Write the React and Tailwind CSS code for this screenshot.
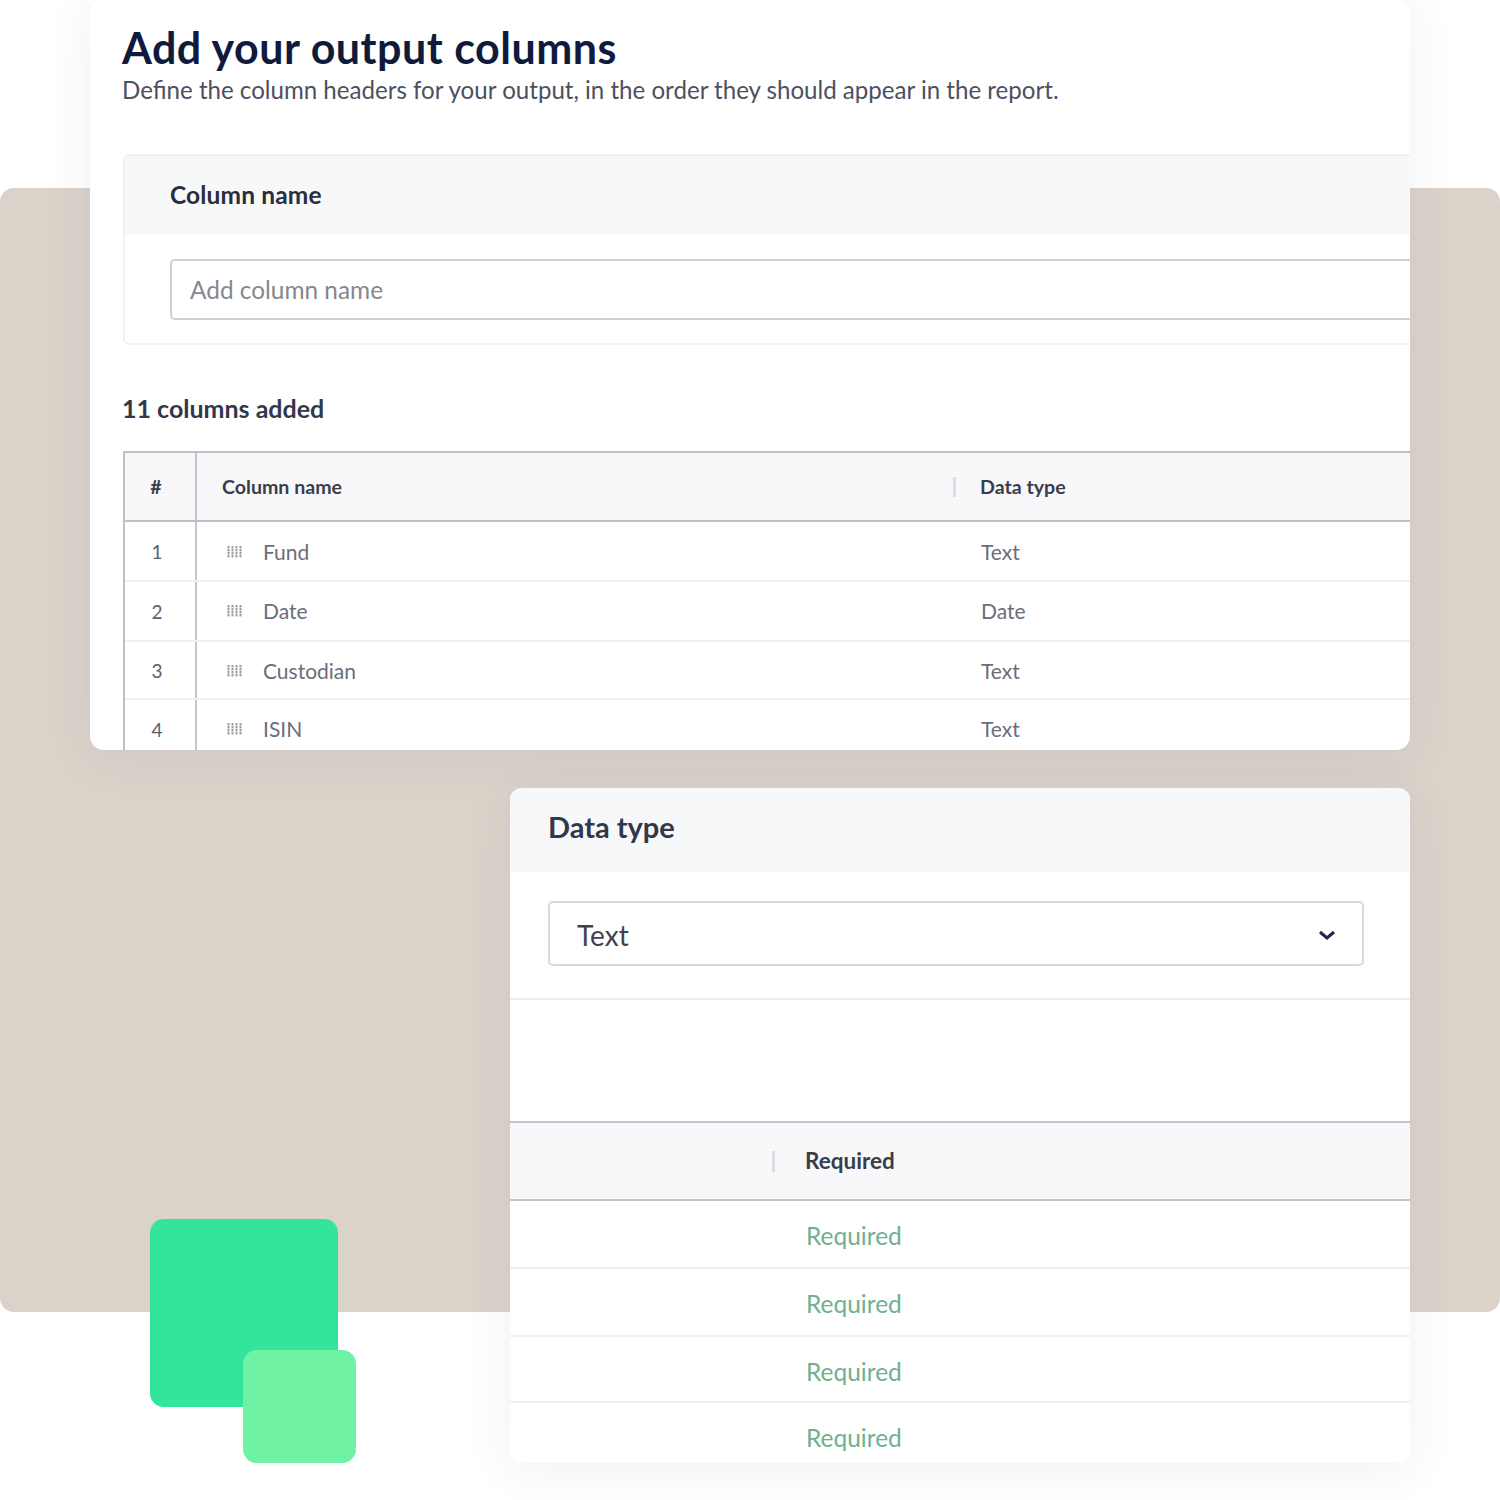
const font = { fontFamily: '"Lato", "Noto Sans", sans-serif' };

function Grip() {
  return (
    <svg width="16" height="12" viewBox="0 0 16 12" className="shrink-0">
      {[0.5, 4.5, 8.5, 12.5].map((x) =>
        [0, 3, 6, 9].map((y) => <rect key={`${x}-${y}`} x={x} y={y} width="2" height="2.4" fill="#9a9ca3" />)
      )}
    </svg>
  );
}

const rows = [
  { n: "1", name: "Fund", type: "Text", h: "h-[60px]", numPad: "pt-[3px]", textPad: "pt-[2px]" },
  { n: "2", name: "Date", type: "Date", h: "h-[60px]", numPad: "pt-[3px]", textPad: "pt-0" },
  { n: "3", name: "Custodian", type: "Text", h: "h-[58px]", numPad: "pt-[3px]", textPad: "pt-[2px]" },
  { n: "4", name: "ISIN", type: "Text", h: "h-[60px]", numPad: "pt-[1px]", textPad: "pb-[2px]" },
];

function Row({ n, name, type, h, numPad, textPad, last }) {
  return (
    <div className={`flex ${h} shrink-0 items-center ${last ? "" : "border-b-2 border-[#f0f0f2]"}`}>
      <div className={`flex h-full w-[72px] shrink-0 items-center justify-center border-r-2 border-[#c4c5ca] pr-[6px] ${numPad} text-[19px] text-[#5b5f6b]`}>{n}</div>
      <div className={`flex w-[784px] shrink-0 items-center gap-[20px] pl-[30px] ${textPad} text-[21px] text-[#6a6e79]`}>
        <Grip />
        <span>{name}</span>
      </div>
      <div className={`${textPad} text-[21px] text-[#6a6e79]`}>{type}</div>
    </div>
  );
}

function Required({ h, pad, last }) {
  return (
    <div className={`flex ${h} shrink-0 items-center pl-[296px] ${pad} text-[24.5px] text-[#6fb08f] ${last ? "" : "border-b-2 border-[#f0f0f2]"}`}>
      Required
    </div>
  );
}

export default function App() {
  return (
    <div style={font} className="relative h-[1500px] w-[1500px] overflow-hidden bg-white">
      <div className="absolute left-0 top-[188px] h-[1124px] w-[1500px] rounded-[14px] bg-[#dbd2ca]" />

      <div className="absolute left-[90px] top-0 flex h-[750px] w-[1320px] flex-col overflow-hidden rounded-[14px] bg-white pl-[32px] pt-[23px] shadow-[0_6px_50px_rgba(60,60,80,0.07)]">
        <h1 className="text-[43px] font-bold leading-[50px] tracking-[0.5px] text-[#0f1b3d]">Add your output columns</h1>
        <p className="mt-[1px] text-[24.1px] leading-[32px] text-[#4c5060]">Define the column headers for your output, in the order they should appear in the report.</p>

        <div className="ml-[1px] mt-[48px] flex h-[191px] shrink-0 flex-col rounded-l-[6px] border-y-2 border-l-2 border-[#f0f1f3]">
          <div className="flex h-[79px] shrink-0 items-center bg-[#f7f8fa] pl-[45px] text-[24.5px] font-bold tracking-[0.15px] text-[#2a2e3c]">Column name</div>
          <div className="pl-[45px] pt-[24px]">
            <div className="flex h-[61px] items-center rounded-l-[5px] border-y-2 border-l-2 border-[#cfd0d4] pl-[18px] pt-[2px] text-[24.4px] text-[#85878f]">Add column name</div>
          </div>
        </div>

        <div className="mt-[46px] text-[25px] font-bold leading-[34px] text-[#33374a]">11 columns added</div>

        <div className="ml-[1px] mt-[26px] flex min-h-0 flex-1 flex-col overflow-hidden border-l-2 border-t-2 border-[#bfc0c5]">
          <div className="flex h-[69px] shrink-0 items-center border-b-2 border-[#bfc0c5] bg-[#f8f8fa] text-[19.6px] font-bold text-[#3a3d4a]">
            <div className="flex h-full w-[72px] shrink-0 items-center justify-center border-r-2 border-[#c4c5ca] pr-[8px]">#</div>
            <div className="flex h-[20px] w-[756px] shrink-0 items-center pl-[25px]">Column name</div>
            <div className="h-[20px] w-[3px] shrink-0 bg-[#dcdde0]" />
            <div className="pl-[24px]">Data type</div>
          </div>
          {rows.map((row, i) => (
            <Row key={row.n} {...row} last={i === rows.length - 1} />
          ))}
        </div>
      </div>

      <div className="absolute left-[510px] top-[788px] flex h-[675px] w-[900px] flex-col overflow-hidden rounded-[12px] bg-white shadow-[0_6px_50px_rgba(60,60,80,0.07)]">
        <div className="flex h-[84px] shrink-0 items-center bg-[#f7f8fa] pb-[6px] pl-[38px] text-[29px] font-bold text-[#33374a]">Data type</div>
        <div className="flex h-[128px] shrink-0 border-b-2 border-[#ededef] pl-[38px] pt-[29px]">
          <div className="flex h-[65px] w-[816px] items-center justify-between rounded-[5px] border-2 border-[#d9d9dc] pl-[27px] pr-[26px] text-[28px] text-[#3f4350]">
            <span className="pt-[3px]">Text</span>
            <svg width="18" height="12" viewBox="0 0 18 12" className="mt-[2px]"><path d="M2 3l7 6 7-6" fill="none" stroke="#1f2a44" strokeWidth="3" /></svg>
          </div>
        </div>
        <div className="mt-[121px] flex h-[80px] shrink-0 items-center border-y-2 border-[#c4c5ca] bg-[#f8f8fa] text-[22.5px] font-bold text-[#3a3d4a]">
          <div className="ml-[262px] h-[21px] w-[3px] bg-[#dcdde0]" />
          <span className="pl-[30px]">Required</span>
        </div>
        <Required h="h-[68px]" pad="pt-[5px]" />
        <Required h="h-[68px]" pad="pt-[5px]" />
        <Required h="h-[66px]" pad="pt-[7px]" />
        <Required h="h-[68px]" pad="pt-[3px]" last />
      </div>

      <div className="absolute left-[150px] top-[1219px] h-[188px] w-[188px] rounded-[14px] bg-[#32e59a]" />
      <div className="absolute left-[243px] top-[1350px] h-[113px] w-[113px] rounded-[14px] bg-[#6ff2a3]" />
    </div>
  );
}
